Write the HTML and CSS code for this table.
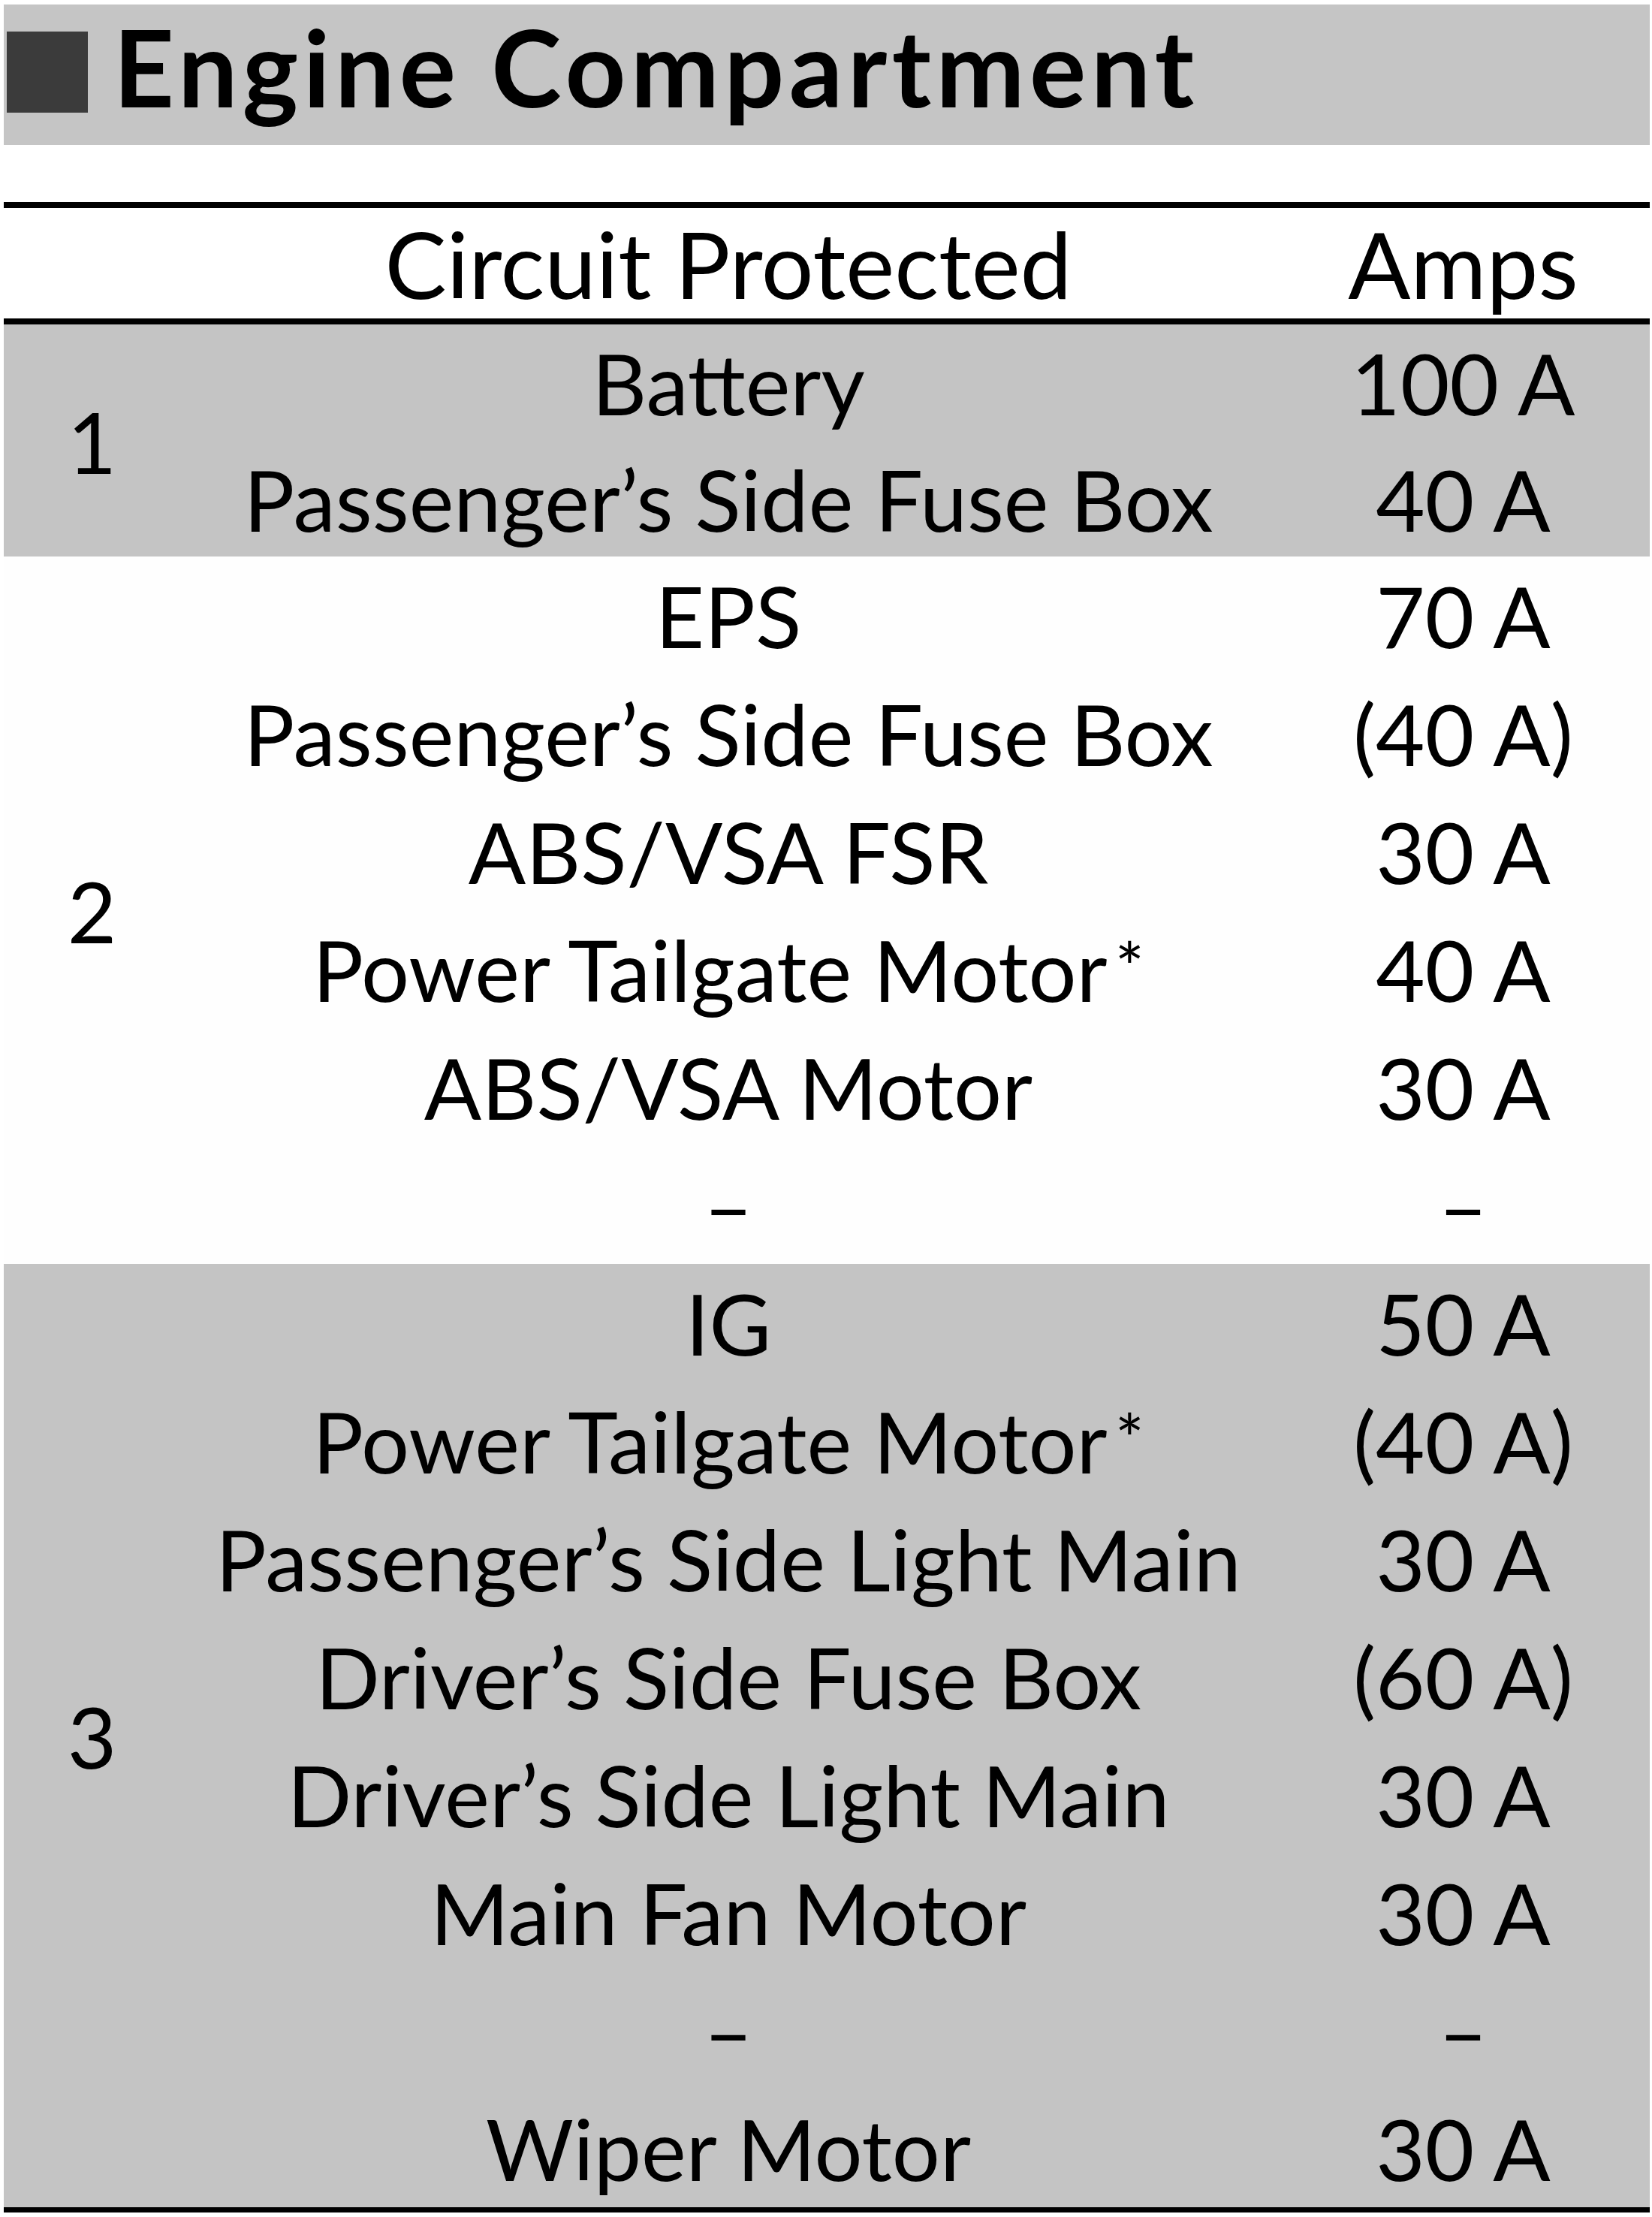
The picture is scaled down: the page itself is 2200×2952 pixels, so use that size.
FILE: index.html
```html
<!DOCTYPE html>
<html lang="en">
<head>
<meta charset="utf-8">
<title>Engine Compartment</title>
<link rel="stylesheet" href="styles.css">
</head>
<body>
<div class="page">
  <div class="title-bar">
    <span class="title-mark"></span>
    <h1 class="title">Engine Compartment</h1>
  </div>

  <div class="fuse-table">
    <div class="head-row">
      <div class="cell-num"></div>
      <div class="cell-circuit">Circuit Protected</div>
      <div class="cell-amps">Amps</div>
    </div>

    <div class="group group-shaded group-first">
      <div class="cell-num">1</div>
      <div class="col-circuit">
        <div class="line">Battery</div>
        <div class="line">Passenger’s Side Fuse Box</div>
      </div>
      <div class="col-amps">
        <div class="line">100 A</div>
        <div class="line">40 A</div>
      </div>
    </div>

    <div class="group group-plain">
      <div class="cell-num">2</div>
      <div class="col-circuit">
        <div class="line">EPS</div>
        <div class="line">Passenger’s Side Fuse Box</div>
        <div class="line">ABS/VSA FSR</div>
        <div class="line">Power Tailgate Motor<sup class="ast">*</sup></div>
        <div class="line">ABS/VSA Motor</div>
        <div class="line">–</div>
      </div>
      <div class="col-amps">
        <div class="line">70 A</div>
        <div class="line">(40 A)</div>
        <div class="line">30 A</div>
        <div class="line">40 A</div>
        <div class="line">30 A</div>
        <div class="line">–</div>
      </div>
    </div>

    <div class="group group-shaded">
      <div class="cell-num">3</div>
      <div class="col-circuit">
        <div class="line">IG</div>
        <div class="line">Power Tailgate Motor<sup class="ast">*</sup></div>
        <div class="line">Passenger’s Side Light Main</div>
        <div class="line">Driver’s Side Fuse Box</div>
        <div class="line">Driver’s Side Light Main</div>
        <div class="line">Main Fan Motor</div>
        <div class="line">–</div>
        <div class="line">Wiper Motor</div>
      </div>
      <div class="col-amps">
        <div class="line">50 A</div>
        <div class="line">(40 A)</div>
        <div class="line">30 A</div>
        <div class="line">(60 A)</div>
        <div class="line">30 A</div>
        <div class="line">30 A</div>
        <div class="line">–</div>
        <div class="line">30 A</div>
      </div>
    </div>
  </div>
</div>
</body>
</html>
```

FILE: styles.css
```css
html, body {
  margin: 0;
  padding: 0;
  background: #ffffff;
}

.page {
  width: 2192px;
  margin-left: 5px;
  padding-top: 6px;
  font-family: "Lato", "Open Sans", sans-serif;
  color: #000;
}

.title-bar {
  display: flex;
  align-items: flex-start;
  height: 187px;
  box-sizing: border-box;
  padding: 12px 0 0 4px;
  background: #c5c5c5;
}

.title-mark {
  width: 108px;
  height: 108px;
  margin-top: 24px;
  background: #3b3b3b;
  flex: none;
}

.title {
  margin: 0 0 0 34px;
  font-size: 141px;
  line-height: 141px;
  font-weight: 700;
  letter-spacing: 6.4px;
}

.fuse-table {
  margin-top: 76px;
  border-top: 8px solid #000;
  border-bottom: 7px solid #000;
}

.head-row {
  display: grid;
  grid-template-columns: 235px 1460px 1fr;
  height: 147px;
  border-bottom: 8px solid #000;
  font-size: 123px;
  line-height: 147px;
  text-align: center;
}

.group {
  display: grid;
  grid-template-columns: 235px 1460px 1fr;
  font-size: 113px;
  text-align: center;
}

.group-shaded {
  background: #c4c4c4;
}

.group-plain {
  background: #fefefe;
}

.cell-num {
  display: flex;
  align-items: center;
  justify-content: center;
}

.line {
  height: 157px;
  line-height: 157px;
  white-space: nowrap;
}

.group-first .line {
  height: 154.5px;
  line-height: 154.5px;
}

.ast {
  font-size: 92px;
  vertical-align: 0;
  position: relative;
  top: -13px;
  margin-left: 10px;
}
```
